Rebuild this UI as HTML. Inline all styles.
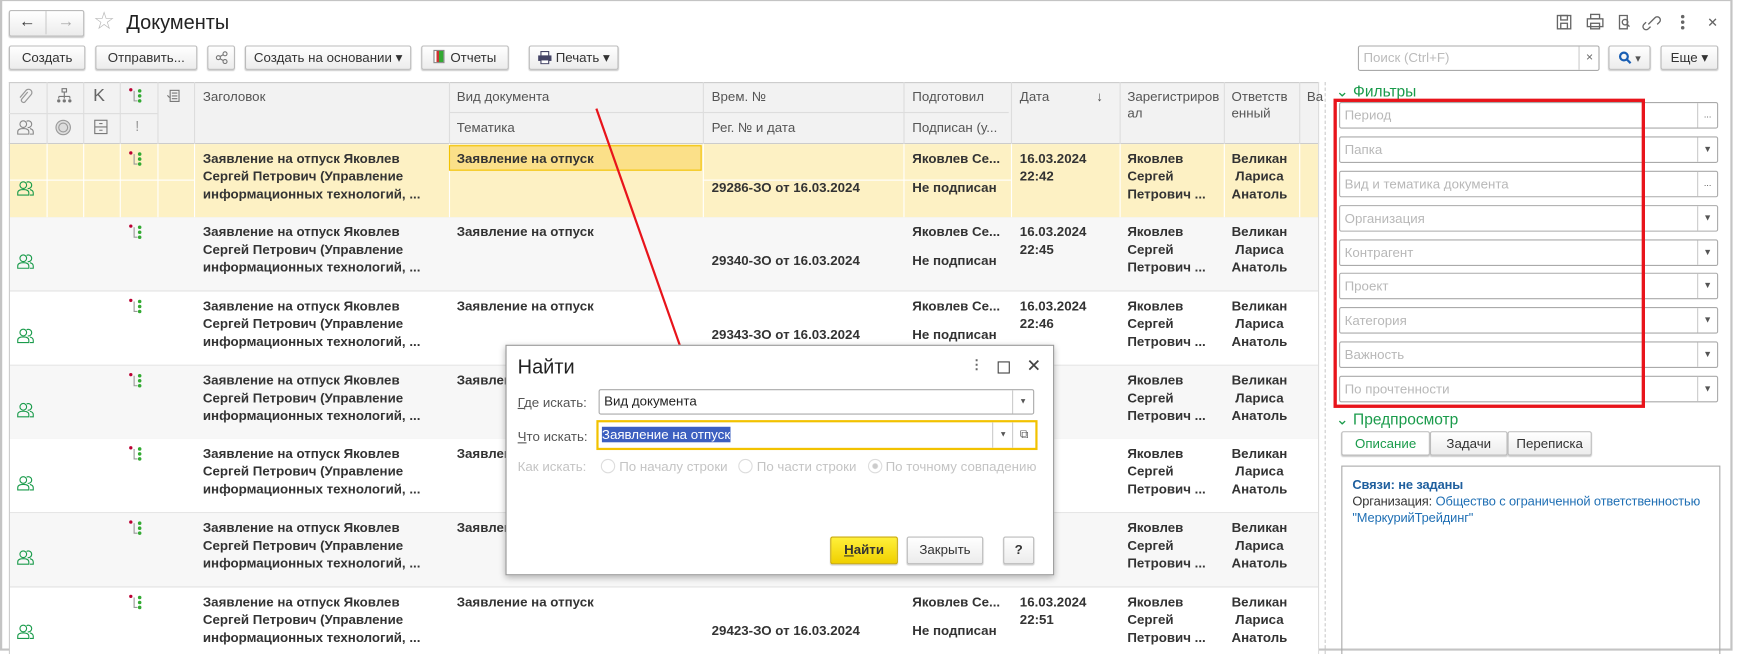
<!DOCTYPE html>
<html><head><meta charset="utf-8"><style>
html,body{margin:0;padding:0;width:1737px;height:654px;overflow:hidden;background:#fff}
#w{position:absolute;left:0;top:0;width:1567px;height:590px;transform:scale(1.10849);transform-origin:0 0;font-family:"Liberation Sans",Arial,sans-serif;font-size:12px;color:#333;background:#fff;overflow:hidden}
.a{position:absolute}
.btn{position:absolute;height:22px;border:1px solid #bbb;border-radius:2px;background:linear-gradient(#fff,#ececec);box-shadow:0 1px 1px #ccc;box-sizing:border-box;font-size:12px;line-height:20px;text-align:center;color:#333}
.b{font-weight:bold;color:#333;font-size:12px;line-height:16px}
.fld{position:absolute;left:1208px;width:342px;height:24px;border:1px solid #aaa;border-radius:2px;box-sizing:border-box;color:#b8b8b8;font-size:12px;line-height:22px;padding-left:4px;background:#fff}
.fld i{position:absolute;right:0;top:0;width:17px;height:22px;border-left:1px solid #ccc;font-style:normal;color:#555;text-align:center;font-size:8px;line-height:22px}
.hd{position:absolute;color:#555;font-size:12px}
</style></head><body><div id="w">
<div class="a" style="left:0;top:0;width:1563px;height:587px;border:2px solid #c4c4c4;border-top:1px solid #c4c4c4;box-sizing:border-box"></div>

<div class="btn" style="left:8px;top:9px;width:68px;height:24px"></div>
<div class="a" style="left:41px;top:10px;width:1px;height:21px;background:#ccc"></div>
<div class="a" style="left:17px;top:11px;font-size:15px;font-weight:bold;color:#333">&#8592;</div>
<div class="a" style="left:52px;top:11px;font-size:15px;font-weight:bold;color:#aaa">&#8594;</div>
<div class="a" style="left:84px;top:6px;font-size:22px;color:#bbb">&#9734;</div>
<div class="a" style="left:114px;top:10px;font-size:18px;color:#222">Документы</div>

<svg class="a" style="left:1400px;top:11px" width="160" height="18" viewBox="0 0 160 18" fill="none" stroke="#666" stroke-width="1.2">
<rect x="5" y="3" width="12" height="12"/><rect x="8" y="3" width="6" height="4"/><rect x="8" y="10" width="6" height="5"/>
<rect x="32" y="6" width="14" height="7"/><rect x="35" y="2" width="8" height="4"/><rect x="35" y="10" width="8" height="5"/>
<path d="M61 3h7v12h-7z"/><circle cx="66" cy="9" r="2.5"/><path d="M68 11l2 2"/>
<path d="M87 11l6-6M85 9l-2 2a2.5 2.5 0 0 0 4 4l2-2M91 7l2-2a2.5 2.5 0 0 1 4 4l-2 2"/>
<circle cx="118" cy="4" r="1" fill="#666"/><circle cx="118" cy="9" r="1" fill="#666"/><circle cx="118" cy="14" r="1" fill="#666"/>
<path d="M142 6l6 6M148 6l-6 6"/></svg>

<div class="btn" style="left:8px;top:41px;width:69px">Создать</div>
<div class="btn" style="left:86px;top:41px;width:92px">Отправить...</div>
<div class="btn" style="left:187px;top:41px;width:25px"><svg width="12" height="12" style="vertical-align:-2px" fill="none" stroke="#777"><circle cx="9" cy="2.5" r="1.8"/><circle cx="3" cy="6" r="1.8"/><circle cx="9" cy="9.5" r="1.8"/><path d="M4.5 5l3-1.7M4.5 7l3 1.7"/></svg></div>
<div class="btn" style="left:221px;top:41px;width:150px">Создать на основании &#9662;</div>
<div class="btn" style="left:380px;top:41px;width:79px"><span style="display:inline-block;width:8px;height:10px;border:1px solid #888;vertical-align:-1px;margin-right:5px;background:linear-gradient(90deg,#fff 2px,#c33 2px,#c33 4px,#3a3 4px)"></span>Отчеты</div>
<div class="btn" style="left:477px;top:41px;width:81px"><svg width="13" height="12" style="vertical-align:-2px"><rect x="3" y="0.5" width="7" height="4" fill="#fff" stroke="#446"/><rect x="0.5" y="4" width="12" height="5" fill="#446"/><rect x="3" y="8" width="7" height="3.5" fill="#fff" stroke="#446"/></svg> Печать &#9662;</div>

<div class="a" style="left:1225px;top:41px;width:218px;height:23px;border:1px solid #aaa;border-radius:2px;box-sizing:border-box;color:#bbb;line-height:21px;padding-left:4px">Поиск (Ctrl+F)</div>
<div class="a" style="left:1424px;top:42px;width:18px;height:21px;border-left:1px solid #ccc;text-align:center;line-height:20px;color:#666;font-size:11px">×</div>
<div class="btn" style="left:1451px;top:41px;width:38px"><svg width="12" height="12" style="vertical-align:-2px" fill="none" stroke="#1a5fb4" stroke-width="2"><circle cx="5" cy="5" r="3.5"/><path d="M7.5 7.5l3.5 3.5"/></svg> <span style="color:#555;font-size:10px">&#9662;</span></div>
<div class="btn" style="left:1498px;top:41px;width:52px">Еще &#9662;</div>

<div class="a" style="left:8px;top:74px;width:1182px;height:56px;background:#f2f2f2;border-top:1px solid #ccc;border-bottom:1px solid #ccc;box-sizing:border-box"></div>
<div class="a" style="left:8px;top:74px;width:1px;height:516px;background:#ccc"></div>
<div class="a" style="left:1189px;top:74px;width:1px;height:516px;background:#ddd"></div>
<div class="a" style="left:8px;top:102px;width:134px;height:1px;background:#ddd"></div>
<div class="a" style="left:405px;top:101px;width:505px;height:1px;background:#ddd"></div>
<div id="cols"></div>
<svg class="a" style="left:16px;top:80px" width="14" height="16" fill="none" stroke="#999" stroke-width="1.1"><path d="M9 3L3.5 9.5a2 2 0 0 0 3 2.5L12 5.5a3 3 0 0 0-4.5-4L2 8"/></svg>
<svg class="a" style="left:51px;top:79px" width="14" height="16" fill="none" stroke="#777"><rect x="5" y="1" width="4" height="3"/><path d="M7 4v4M2 8h10M2 8v2M7 8v2M12 8v2"/><circle cx="2" cy="12" r="1" fill="#777"/><circle cx="7" cy="12" r="1" fill="#777"/><circle cx="12" cy="12" r="1" fill="#777"/></svg>
<div class="hd" style="left:84px;top:78px;font-size:16px;color:#666">K</div>
<svg class="a" style="left:116px;top:79px" width="14" height="16"><circle cx="2" cy="2" r="1.5" fill="#b03"/><path d="M5 3v9h3" stroke="#999" fill="none"/><circle cx="10" cy="3" r="1.6" fill="#3a3"/><circle cx="10" cy="7.5" r="1.6" fill="#3a3"/><circle cx="10" cy="12" r="1.6" fill="#3a3"/></svg>
<svg class="a" style="left:150px;top:80px" width="14" height="14" fill="none" stroke="#777"><rect x="3.5" y="1.5" width="8" height="10"/><path d="M5 4h5M5 6.5h5M5 9h5M1 6l2 2"/></svg>
<svg class="a" style="left:15px;top:107px" width="16" height="16" fill="none" stroke="#888"><circle cx="6" cy="5" r="3"/><path d="M1 14v-2c0-2 2-3 5-3s5 1 5 3v2z"/><path d="M9 2.5a3 3 0 1 1 1 5.5M12 9c2 .5 3 1.5 3 3v2h-3"/></svg>
<svg class="a" style="left:49px;top:107px" width="16" height="16"><circle cx="8" cy="8" r="6.5" fill="#ddd" stroke="#999"/><circle cx="8" cy="8" r="4" fill="none" stroke="#999"/></svg>
<svg class="a" style="left:84px;top:107px" width="14" height="16" fill="none" stroke="#777"><rect x="1.5" y="1.5" width="11" height="12"/><path d="M1.5 7.5h11M5.5 4.5h3M5.5 10.5h3"/></svg>
<div class="hd" style="left:122px;top:106px;color:#999;font-size:13px">!</div>
<div class="hd" style="left:183px;top:80px">Заголовок</div>
<div class="hd" style="left:412px;top:80px">Вид документа</div>
<div class="hd" style="left:412px;top:108px">Тематика</div>
<div class="hd" style="left:642px;top:80px">Врем. №</div>
<div class="hd" style="left:642px;top:108px">Рег. № и дата</div>
<div class="hd" style="left:823px;top:80px">Подготовил</div>
<div class="hd" style="left:823px;top:108px">Подписан (у...</div>
<div class="hd" style="left:920px;top:80px">Дата</div>
<div class="hd" style="left:989px;top:80px">&#8595;</div>
<div class="hd" style="left:1017px;top:80px;line-height:15px">Зарегистриров<br>ал</div>
<div class="hd" style="left:1111px;top:80px;line-height:15px">Ответств<br>енный</div>
<div class="hd" style="left:1179px;top:80px">Ва</div>

<div id="rows"></div>

<div class="a" style="left:1195px;top:74px;height:516px;border-left:1px dashed #ccc"></div>

<div class="a" style="left:1205px;top:74px;color:#1a9b4b;font-size:14px">&#8964; Фильтры</div>
<div class="fld" style="top:92px">Период<i>...</i></div>
<div class="fld" style="top:123px">Папка<i>&#9660;</i></div>
<div class="fld" style="top:154px">Вид и тематика документа<i>...</i></div>
<div class="fld" style="top:185px">Организация<i>&#9660;</i></div>
<div class="fld" style="top:216px">Контрагент<i>&#9660;</i></div>
<div class="fld" style="top:246px">Проект<i>&#9660;</i></div>
<div class="fld" style="top:277px">Категория<i>&#9660;</i></div>
<div class="fld" style="top:308px">Важность<i>&#9660;</i></div>
<div class="fld" style="top:339px">По прочтенности<i>&#9660;</i></div>
<div class="a" style="left:1203px;top:89px;width:281px;height:279px;border:3px solid #e8141b;box-sizing:border-box"></div>
<div class="a" style="left:1205px;top:370px;color:#1a9b4b;font-size:14px">&#8964; Предпросмотр</div>
<div class="btn" style="left:1210px;top:389px;width:80px;color:#1a9b4b;background:#fff">Описание</div>
<div class="btn" style="left:1290px;top:389px;width:70px">Задачи</div>
<div class="btn" style="left:1360px;top:389px;width:76px">Переписка</div>
<div class="a" style="left:1210px;top:420px;width:342px;height:175px;border:1px solid #aaa;box-sizing:border-box"></div>
<div class="a" style="left:1220px;top:430px;font-size:11.6px;line-height:15px;color:#333;letter-spacing:-0.1px"><b style="color:#1f5f9e">Связи: не заданы</b><br>Организация: <span style="color:#1f6fb4">Общество с ограниченной ответственностью<br>"МеркурийТрейдинг"</span></div>

<svg class="a" style="left:0;top:0" width="1567" height="590"><line x1="538" y1="98" x2="617" y2="322" stroke="#e8141b" stroke-width="2"/><polygon points="622,334 611,320 622,316" fill="#e8141b"/></svg>

<div class="a" style="left:456px;top:311px;width:495px;height:208px;background:#fff;border:1px solid #999;box-shadow:0 2px 6px rgba(0,0,0,.3);box-sizing:border-box">
 <div class="a" style="left:10px;top:9px;font-size:18px;color:#222">Найти</div>
 <div class="a" style="left:418px;top:10px;color:#666;font-weight:bold">&#8942;</div>
 <div class="a" style="left:443px;top:14px;width:9px;height:9px;border:1.5px solid #444"></div>
 <div class="a" style="left:469px;top:8px;font-size:16px;color:#444">&#10005;</div>
 <div class="a" style="left:10px;top:44px;color:#555"><u>Г</u>де искать:</div>
 <div class="a" style="left:83px;top:39px;width:393px;height:23px;border:1px solid #aaa;border-radius:2px;box-sizing:border-box;line-height:21px;padding-left:4px;color:#222">Вид документа<span style="position:absolute;right:0;top:0;width:18px;height:21px;border-left:1px solid #ccc;text-align:center;font-size:7px;color:#555">&#9660;</span></div>
 <div class="a" style="left:10px;top:75px;color:#555"><u>Ч</u>то искать:</div>
 <div class="a" style="left:81px;top:67px;width:398px;height:27px;border:2px solid #f2c200;box-sizing:border-box;line-height:23px;padding-left:3px"><span style="background:#3c5fc0;color:#fff">Заявление на отпуск</span><span style="position:absolute;right:20px;top:0;width:18px;height:23px;border-left:1px solid #ccc;text-align:center;font-size:7px;color:#555">&#9660;</span><span style="position:absolute;right:0;top:0;width:20px;height:23px;border-left:1px solid #ccc;text-align:center;font-size:11px;color:#555">&#10697;</span></div>
 <div class="a" style="left:10px;top:102px;color:#c4c4c4;white-space:nowrap">Как искать:&nbsp;&nbsp;&nbsp;&nbsp;<span style="display:inline-block;width:11px;height:11px;border:1px solid #ddd;border-radius:50%;vertical-align:-2px"></span> По началу строки &nbsp;&nbsp;<span style="display:inline-block;width:11px;height:11px;border:1px solid #ddd;border-radius:50%;vertical-align:-2px"></span> По части строки &nbsp;&nbsp;<span style="display:inline-block;width:11px;height:11px;border:1px solid #ddd;border-radius:50%;vertical-align:-2px;background:radial-gradient(#ccc 2px,#fff 3px)"></span> По точному совпадению</div>
 <div class="btn" style="left:292px;top:172px;width:61px;height:25px;line-height:23px;background:linear-gradient(#fff03a,#f0d000);border-color:#c9a800;font-weight:bold;color:#333"><u>Н</u>айти</div>
 <div class="btn" style="left:361px;top:172px;width:69px;height:25px;line-height:23px">Закрыть</div>
 <div class="btn" style="left:448px;top:172px;width:28px;height:25px;line-height:23px;font-weight:bold">?</div>
</div>

<script>
var cols=[42,75,108,142,175,405,634,815,912,1010,1104,1172];
var h='';cols.forEach(function(x){h+='<div class="a" style="left:'+x+'px;top:74px;width:1px;height:56px;background:#ddd"></div>';});
document.getElementById('cols').outerHTML=h;
var tops=[130,196,263,330,396,463,530],ts=['22:42','22:45','22:46','','','','22:51'],nums=['29286-ЗО','29340-ЗО','29343-ЗО','','','','29423-ЗО'];
var r='';
tops.forEach(function(t,i){
 var bg=i==0?'#fdf1c4':(i%2?'#f7f7f7':'#fff');
 r+='<div class="a" style="left:9px;top:'+t+'px;width:1180px;height:67px;background:'+bg+';border-bottom:1px solid #e2e2e2;box-sizing:border-box"></div>';
 if(i==0){cols.forEach(function(x){r+='<div class="a" style="left:'+x+'px;top:130px;width:1px;height:66px;background:#fff"></div>';});
  r+='<div class="a" style="left:9px;top:162px;width:166px;height:1px;background:#fff"></div><div class="a" style="left:634px;top:162px;width:278px;height:1px;background:#fff"></div>';
  r+='<div class="a" style="left:405px;top:131px;width:228px;height:23px;background:#fbe089;border:1.5px solid #f2c200;box-sizing:border-box"></div>';}
 r+='<svg class="a" style="left:15px;top:'+(t+32)+'px" width="16" height="16" fill="none" stroke="#1a9b4b"><circle cx="6" cy="5" r="3"/><path d="M1 14v-2c0-2 2-3 5-3s5 1 5 3v2z"/><path d="M9 2.5a3 3 0 1 1 1 5.5M12 9c2 .5 3 1.5 3 3v2h-3"/></svg>';
 r+='<svg class="a" style="left:116px;top:'+(t+6)+'px" width="14" height="16"><circle cx="2" cy="2" r="1.5" fill="#b03"/><path d="M5 3v9h3" stroke="#999" fill="none"/><circle cx="10" cy="3" r="1.6" fill="#3a3"/><circle cx="10" cy="7.5" r="1.6" fill="#3a3"/><circle cx="10" cy="12" r="1.6" fill="#3a3"/></svg>';
 r+='<div class="a b" style="left:183px;top:'+(t+5)+'px">Заявление на отпуск Яковлев<br>Сергей Петрович (Управление<br>информационных технологий, ...</div>';
 r+='<div class="a b" style="left:412px;top:'+(t+5)+'px">Заявление на отпуск</div>';
 if(i<3||i==6){
 r+='<div class="a b" style="left:642px;top:'+(t+31)+'px">'+nums[i]+' от 16.03.2024</div>';
 r+='<div class="a b" style="left:823px;top:'+(t+5)+'px">Яковлев Се...</div>';
 r+='<div class="a b" style="left:823px;top:'+(t+31)+'px">Не подписан</div>';
 r+='<div class="a b" style="left:920px;top:'+(t+5)+'px">16.03.2024<br>'+ts[i]+'</div>';}
 r+='<div class="a b" style="left:1017px;top:'+(t+5)+'px">Яковлев<br>Сергей<br>Петрович ...</div>';
 r+='<div class="a b" style="left:1111px;top:'+(t+5)+'px;text-align:center">Великан<br>Лариса<br>Анатоль</div>';
});
document.getElementById('rows').outerHTML=r;
</script>
</div></body></html>
